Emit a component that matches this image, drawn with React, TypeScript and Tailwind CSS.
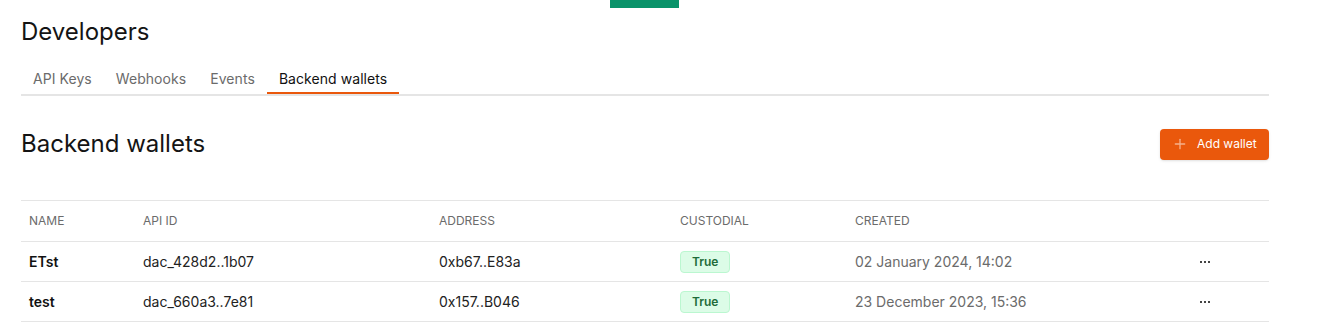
import { Plus } from 'lucide-react';

const tabs = ['API Keys', 'Webhooks', 'Events', 'Backend wallets'];

const wallets = [
  { name: 'ETst', apiId: 'dac_428d2..1b07', address: '0xb67..E83a', custodial: true, created: '02 January 2024, 14:02' },
  { name: 'test', apiId: 'dac_660a3..7e81', address: '0x157..B046', custodial: true, created: '23 December 2023, 15:36' },
];

export default function App() {
  return (
    <div className="relative min-h-[335px] bg-white font-['Inter',sans-serif] text-[#111]">
      {/* 顶部标记 */}
      <div className="absolute left-[610px] top-0 h-[8px] w-[69px] bg-[#0a936a]" />

      <div className="w-[1248px] ml-[21px] pt-4">
        <h1 className="text-2xl leading-8 text-[#141414]">Developers</h1>

        <div className="mt-[21px] flex border-b-2 border-[#e5e5e5]">
          {tabs.map((tab) => {
            const active = tab === 'Backend wallets';
            return (
              <div
                key={tab}
                className={
                  active
                    ? 'px-3 pb-[3px] text-sm leading-5 tracking-[0.06px] text-[#111] border-b-2 border-[#ea580c]'
                    : 'px-3 pb-[3px] text-sm leading-5 tracking-[0.06px] text-[#6b6b6b] border-b-2 border-transparent'
                }
              >
                {tab}
              </div>
            );
          })}
        </div>

        <div className="mt-8 flex items-center justify-between">
          <h2 className="text-2xl leading-8 text-[#141414]">Backend wallets</h2>
          <button className="flex h-[31px] w-[109px] items-center gap-[9px] rounded bg-[#ea580c] pl-[12px] text-xs font-normal text-white shadow-sm">
            <Plus className="h-4 w-4 text-[#f6b08a]" strokeWidth={2} />
            Add wallet
          </button>
        </div>

        {/* 钱包列表 */}
        <table className="mt-[40px] w-full table-fixed border-collapse text-left">
          <colgroup>
            <col className="w-[114px]" />
            <col className="w-[296px]" />
            <col className="w-[241px]" />
            <col className="w-[175px]" />
            <col className="w-[345px]" />
            <col />
          </colgroup>
          <thead>
            <tr className="h-[41px] border-y border-[#e5e5e5] text-xs text-[#6b6b6b] uppercase">
              <th className="px-2 font-normal">Name</th>
              <th className="px-2 font-normal">API ID</th>
              <th className="px-2 font-normal">Address</th>
              <th className="px-2 font-normal">Custodial</th>
              <th className="px-2 font-normal">Created</th>
              <th className="px-2 font-normal" />
            </tr>
          </thead>
          <tbody>
            {wallets.map((w) => (
              <tr key={w.apiId} className="h-[40px] border-b border-[#e5e5e5] text-sm">
                <td className="px-2 font-semibold text-[#111]">{w.name}</td>
                <td className="px-2 text-[#222]">{w.apiId}</td>
                <td className="px-2 text-[#222]">{w.address}</td>
                <td className="px-2">
                  {w.custodial && (
                    <span className="inline-flex h-[22px] items-center rounded border border-[#bbf7d0] bg-[#dcfce7] px-[11px] text-xs font-semibold text-[#1f6b3a]">
                      True
                    </span>
                  )}
                </td>
                <td className="px-2 text-[#6b6b6b]">{w.created}</td>
                <td className="px-2">
                  <div className="flex gap-[2px]">
                    <span className="h-[2px] w-[2px] bg-[#444]" />
                    <span className="h-[2px] w-[2px] bg-[#444]" />
                    <span className="h-[2px] w-[2px] bg-[#444]" />
                  </div>
                </td>
              </tr>
            ))}
          </tbody>
        </table>
      </div>
    </div>
  );
}
